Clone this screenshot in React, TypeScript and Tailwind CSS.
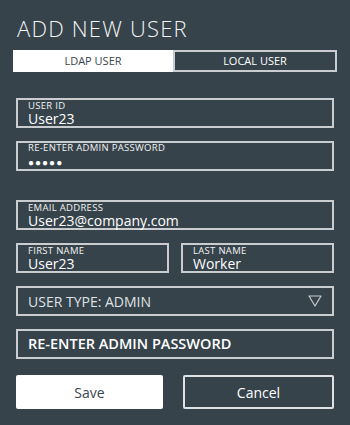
import React from "react";

const font = { fontFamily: '"Open Sans", "Liberation Sans", sans-serif' };

function Field({ label, value, className = "" }: { label: string; value: React.ReactNode; className?: string }) {
  return (
    <div className={`h-[30px] border-2 border-[#c9cdd0] pl-[10px] flex flex-col justify-center gap-[1px] ${className}`}>
      <div className="text-[9.5px] leading-[10px] font-medium text-[#f2f2f2] tracking-[0.3px]">{label}</div>
      <div className="text-[14px] leading-[14px] font-medium text-white">{value}</div>
    </div>
  );
}

export default function App() {
  return (
    <div className="w-[350px] h-[425px] bg-[#36434b] px-4 pt-[14px]" style={font}>
      <h1 className="text-[22px] leading-[28px] font-light text-[#f4f4f4] pl-[1px] tracking-[1.2px]">ADD NEW USER</h1>
      <div className="mt-[8px] -mx-[3px] flex h-[22px]">
        <div className="flex-1 bg-white flex items-center justify-center text-[11px] font-medium text-[#3a454d]">LDAP USER</div>
        <div className="flex-1 border-2 border-[#c9cdd0] flex items-center justify-center text-[11px] font-medium text-white">LOCAL USER</div>
      </div>
      <div className="mt-[26px] flex flex-col gap-[13px]">
        <Field label="USER ID" value="User23" />
        <Field
          label="RE-ENTER ADMIN PASSWORD"
          value={<span className="text-[10px] tracking-[1px] leading-[14px]">●●●●●</span>}
        />
      </div>
      <div className="mt-[29px] flex flex-col gap-[13px]">
        <Field label="EMAIL ADDRESS" value="User23@company.com" />
        <div className="flex gap-[12px]">
          <Field label="FIRST NAME" value="User23" className="flex-1" />
          <Field label="LAST NAME" value="Worker" className="flex-1" />
        </div>
        <div className="h-[30px] border-2 border-[#c9cdd0] pl-[10px] pr-[10px] flex items-center justify-between">
          <span className="text-[14px] text-[#dfe2e4]">USER TYPE: ADMIN</span>
          <svg width="14" height="12" viewBox="0 0 14 12" fill="none">
            <path d="M1 1 H13 L7 11 Z" stroke="#c9cdd0" strokeWidth="1.2" strokeLinejoin="round" />
          </svg>
        </div>
        <div className="h-[30px] border-2 border-[#c9cdd0] pl-[10px] flex items-center">
          <span className="text-[14.5px] font-semibold text-white">RE-ENTER ADMIN PASSWORD</span>
        </div>
      </div>
      <div className="mt-[16px] flex gap-[20px]">
        <button className="flex-1 h-[34px] bg-white rounded-[2px] text-[14px] font-medium text-[#3a454d]">Save</button>
        <button className="flex-1 h-[34px] border-2 border-[#dfe2e4] rounded-[2px] text-[14px] font-medium text-white">Cancel</button>
      </div>
    </div>
  );
}
